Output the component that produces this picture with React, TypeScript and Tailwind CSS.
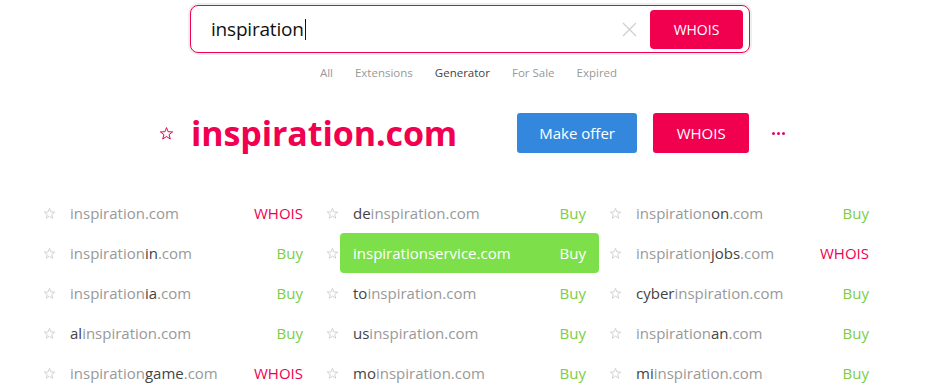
import React from "react";

type Item = { pre?: string; post?: string; action: "Buy" | "WHOIS"; active?: boolean };

const columns: Item[][] = [
    [
        { action: "WHOIS" },
        { post: "in", action: "Buy" },
        { post: "ia", action: "Buy" },
        { pre: "al", action: "Buy" },
        { post: "game", action: "WHOIS" },
    ],
    [
        { pre: "de", action: "Buy" },
        { post: "service", action: "Buy", active: true },
        { pre: "to", action: "Buy" },
        { pre: "us", action: "Buy" },
        { pre: "mo", action: "Buy" },
    ],
    [
        { post: "on", action: "Buy" },
        { post: "jobs", action: "WHOIS" },
        { pre: "cyber", action: "Buy" },
        { post: "an", action: "Buy" },
        { pre: "mi", action: "Buy" },
    ],
];

const tabs = ["All", "Extensions", "Generator", "For Sale", "Expired"];

function Star({ size, color }: { size: number; color: string }) {
    return (
        <svg width={size} height={size} viewBox="0 0 24 24" fill="none">
            <path
                d="M12 2.5 L14.6 9.2 L21.8 9.4 L16.1 13.9 L18.1 20.8 L12 16.8 L5.9 20.8 L7.9 13.9 L2.2 9.4 L9.4 9.2 Z"
                stroke={color}
                strokeWidth="1.6"
                strokeLinejoin="miter"
            />
        </svg>
    );
}

function DomainRow({ item }: { item: Item }) {
    const active = item.active;
    return (
        <div className="flex items-center h-[40px]">
            <span className="w-[17px] pl-[3px] flex items-center">
                <Star size={13} color="#cccccc" />
            </span>
            <div
                className={`w-[259px] h-[40px] flex items-center justify-between px-[13px] rounded-[4px] text-[15px] ${
                    active ? "bg-[#7ddf4a]" : ""
                }`}
            >
                <span className={active ? "text-white" : "text-[#999999]"}>
                    {item.pre && <span className={active ? "" : "text-[#444444]"}>{item.pre}</span>}
                    inspiration
                    {item.post && <span className={active ? "" : "text-[#444444]"}>{item.post}</span>}
                    .com
                </span>
                <span
                    className={
                        active ? "text-white" : item.action === "WHOIS" ? "text-[#f0004f]" : "text-[#7ccd45]"
                    }
                >
                    {item.action}
                </span>
            </div>
        </div>
    );
}

export default function App() {
    return (
        <div className="w-[933px] h-[392px] bg-white overflow-hidden font-['Open_Sans',sans-serif]">
            <div className="ml-[188px] mt-[3px] w-[564px] p-[2px] rounded-[10px] bg-[#eeeeee]">
                <div className="h-[48px] bg-white border border-[#f0004f] rounded-[8px] flex items-center pl-[20px] pr-[6px]">
                    <span className="text-[19px] text-[#111111] tracking-[-0.2px]">inspiration</span>
                    <span className="w-[1px] h-[21px] bg-[#111111] ml-[1px]" />
                    <div className="flex-1" />
                    <svg width="15" height="15" viewBox="0 0 15 15" className="mr-[13px]">
                        <path d="M1 1 L14 14 M14 1 L1 14" stroke="#d0d0d0" strokeWidth="1.3" />
                    </svg>
                    <button className="w-[93px] h-[39px] bg-[#f0004f] rounded-[4px] text-white text-[14px]">WHOIS</button>
                </div>
            </div>

            <div className="flex justify-center gap-[22px] ml-[4px] mt-[9px] text-[11.5px] text-[#999999]">
                {tabs.map((t) => (
                    <span key={t} className={t === "Generator" ? "text-[#444444]" : ""}>
                        {t}
                    </span>
                ))}
            </div>

            <div className="flex items-center mt-[32px] h-[40px] ml-[159px]">
                <Star size={15} color="#f0004f" />
                <h1 className="ml-[17px] text-[34px] font-bold text-[#f0004f] tracking-[-0.1px] leading-none">
                    inspiration.com
                </h1>
                <button className="ml-[60px] w-[120px] h-[40px] bg-[#3388dd] rounded-[3px] text-white text-[15px]">
                    Make offer
                </button>
                <button className="ml-[16px] w-[96px] h-[40px] bg-[#f0004f] rounded-[3px] text-white text-[15px]">
                    WHOIS
                </button>
                <div className="ml-[23px] flex gap-[2px]">
                    <span className="w-[3px] h-[3px] rounded-full bg-[#e8006a]" />
                    <span className="w-[3px] h-[3px] rounded-full bg-[#e8006a]" />
                    <span className="w-[3px] h-[3px] rounded-full bg-[#e8006a]" />
                </div>
            </div>

            <div className="flex gap-[7px] ml-[40px] mt-[40px]">
                {columns.map((col, i) => (
                    <div key={i} className="flex flex-col">
                        {col.map((item, j) => (
                            <DomainRow key={j} item={item} />
                        ))}
                    </div>
                ))}
            </div>
        </div>
    );
}
